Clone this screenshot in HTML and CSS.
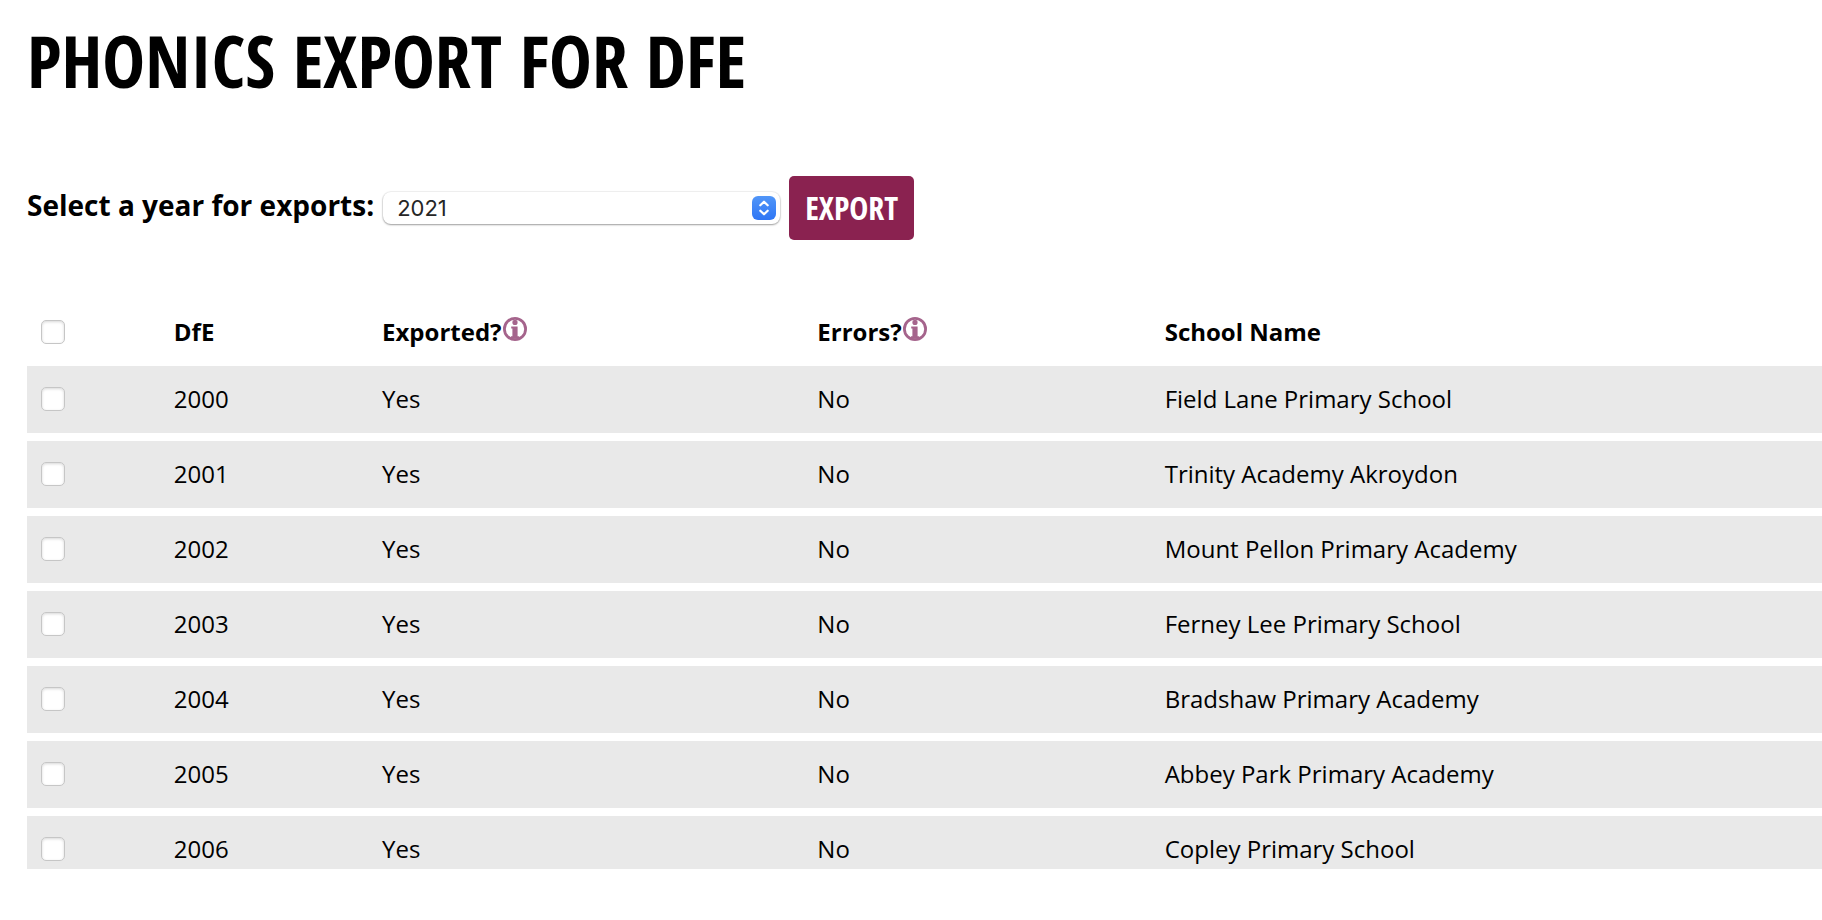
FILE: index.html
```html
<!DOCTYPE html>
<html lang="en">
<head>
<meta charset="utf-8">
<title>Phonics Export for DfE</title>
<link rel="stylesheet" href="styles.css">
</head>
<body>
<svg class="sprite" aria-hidden="true">
  <symbol id="info" viewBox="0 0 24 24">
    <circle cx="12" cy="12" r="10.6" fill="#fff" stroke="#a5648c" stroke-width="2.8"/>
    <circle cx="12" cy="5.4" r="2.6" fill="#a5648c"/>
    <path d="M8.2 9.4h6.4v9.8h1.6v2.6H8v-2.6h1.4v-7.6H8.2z" fill="#a5648c"/>
  </symbol>
</svg>
<main class="page">
  <h1 class="title">Phonics Export for DfE</h1>
  <form class="export-form">
    <label class="export-label" for="year">Select a year for exports:</label>
    <div class="select-wrap">
      <select class="year-select" id="year"><option>2021</option></select>
      <svg class="stepper" viewBox="0 0 24 24" aria-hidden="true">
        <defs><linearGradient id="blue" x1="0" y1="0" x2="0" y2="1"><stop offset="0" stop-color="#5196f8"/><stop offset="1" stop-color="#2f76f5"/></linearGradient></defs>
        <rect width="24" height="24" rx="6" fill="url(#blue)"/>
        <path d="M8.3 9.3 12 5.7l3.7 3.6M8.3 14.7l3.7 3.6 3.7-3.6" fill="none" stroke="#fff" stroke-width="2.2" stroke-linecap="round" stroke-linejoin="round"/>
      </svg>
    </div>
    <button class="export-button" type="button">Export</button>
  </form>
  <div class="table-view">
    <table class="schools">
      <colgroup><col class="col-check"><col class="col-dfe"><col class="col-exported"><col class="col-errors"><col></colgroup>
      <thead>
        <tr><th><input class="check" type="checkbox" aria-label="Select all schools"></th><th>DfE</th><th>Exported?<svg class="info"><use href="#info"/></svg></th><th>Errors?<svg class="info"><use href="#info"/></svg></th><th>School Name</th></tr>
      </thead>
      <tbody>
        <tr><td><input class="check" type="checkbox" aria-label="Select 2000"></td><td>2000</td><td>Yes</td><td>No</td><td>Field Lane Primary School</td></tr>
        <tr><td><input class="check" type="checkbox" aria-label="Select 2001"></td><td>2001</td><td>Yes</td><td>No</td><td>Trinity Academy Akroydon</td></tr>
        <tr><td><input class="check" type="checkbox" aria-label="Select 2002"></td><td>2002</td><td>Yes</td><td>No</td><td>Mount Pellon Primary Academy</td></tr>
        <tr><td><input class="check" type="checkbox" aria-label="Select 2003"></td><td>2003</td><td>Yes</td><td>No</td><td>Ferney Lee Primary School</td></tr>
        <tr><td><input class="check" type="checkbox" aria-label="Select 2004"></td><td>2004</td><td>Yes</td><td>No</td><td>Bradshaw Primary Academy</td></tr>
        <tr><td><input class="check" type="checkbox" aria-label="Select 2005"></td><td>2005</td><td>Yes</td><td>No</td><td>Abbey Park Primary Academy</td></tr>
        <tr><td><input class="check" type="checkbox" aria-label="Select 2006"></td><td>2006</td><td>Yes</td><td>No</td><td>Copley Primary School</td></tr>
      </tbody>
    </table>
  </div>
</main>
</body>
</html>
```
FILE: styles.css
```css
* { box-sizing: border-box; }

body {
  margin: 0;
  background: #fff;
  color: #000;
  font-family: "Open Sans", "Noto Sans", sans-serif;
}

.sprite { display: none; }

.page {
  display: flex;
  flex-direction: column;
  height: 100vh;
  padding: 10px 0 51px 27px;
}

.title {
  margin: 0;
  font: bold 72px/100px "Open Sans Condensed", "Liberation Sans Narrow", "Open Sans", sans-serif;
  text-transform: uppercase;
  white-space: nowrap;
}

.export-form {
  display: flex;
  align-items: center;
  gap: 9px;
  margin: 66px 0 59px;
}

.export-label {
  padding-bottom: 6px;
  font-size: 28px;
  font-weight: bold;
  line-height: 40px;
  white-space: nowrap;
}

.select-wrap {
  position: relative;
  flex: 0 1 397px;
}

.year-select {
  display: block;
  width: 100%;
  height: 32px;
  padding: 0 40px 0 14px;
  appearance: none;
  border: 0;
  border-radius: 8px;
  background: #fff;
  box-shadow: 0 0 1px 1px rgba(0, 0, 0, 0.06), 0 1px 2px rgba(0, 0, 0, 0.35);
  color: #262626;
  font: 22px/32px Inter, sans-serif;
}

.stepper {
  position: absolute;
  top: 4px;
  right: 4px;
  width: 24px;
  height: 24px;
  pointer-events: none;
}

.export-button {
  height: 64px;
  padding: 0 16px;
  border: 0;
  border-radius: 5px;
  background: #8a2250;
  color: #fff;
  font: bold 32px/64px "Open Sans Condensed", "Liberation Sans Narrow", "Open Sans", sans-serif;
  text-transform: uppercase;
}

.table-view {
  flex: 1;
  min-height: 0;
  overflow: hidden;
}

.schools {
  width: 100%;
  table-layout: fixed;
  border-collapse: collapse;
  font-size: 24px;
  line-height: 35px;
}

.col-check { width: 7.4%; }
.col-dfe { width: 11.6%; }
.col-exported { width: 24.25%; }
.col-errors { width: 19.35%; }

.schools th,
.schools td {
  padding: 15px 14px 17px;
  text-align: left;
  white-space: nowrap;
}

.schools td {
  border-bottom: 8px solid #fff;
  background: #e9e9e9;
}

.check {
  display: block;
  width: 24px;
  height: 24px;
  margin: 0;
  appearance: none;
  border: 1px solid #c6c6c6;
  border-radius: 5px;
  background: #fff;
  box-shadow: inset 0 1px 3px rgba(0, 0, 0, 0.16);
}

.info {
  width: 24px;
  height: 24px;
  margin-left: 1px;
  vertical-align: 0;
}
```
